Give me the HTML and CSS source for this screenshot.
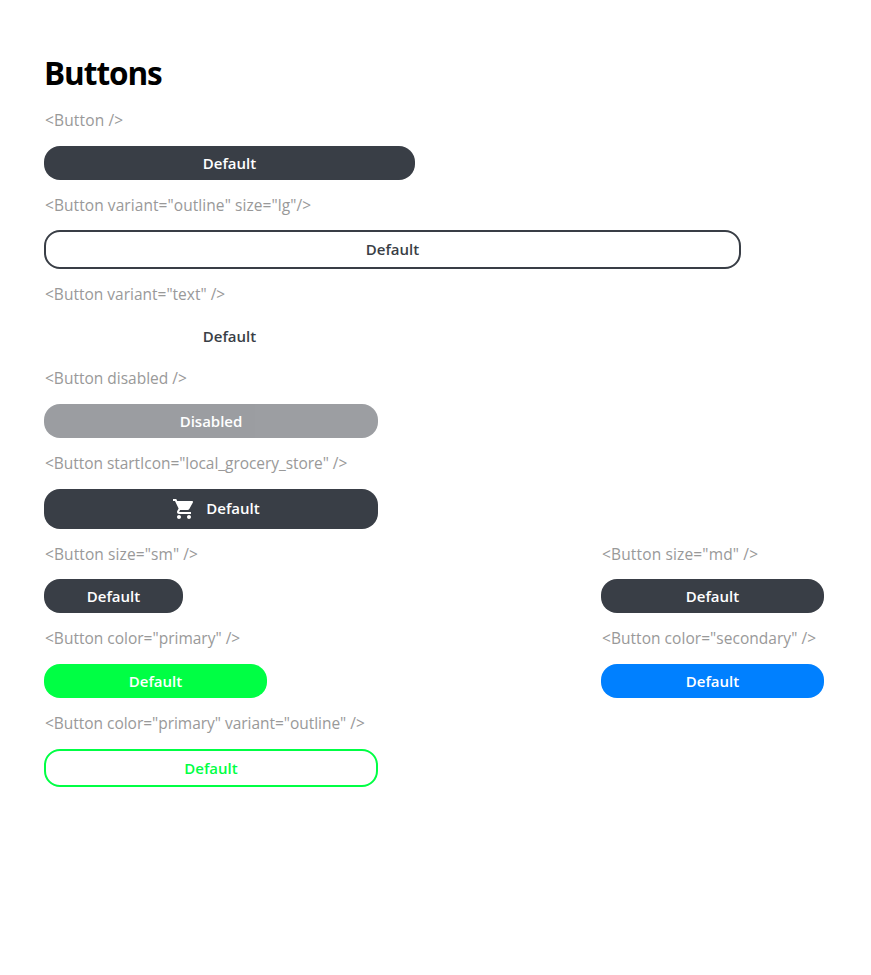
FILE: index.html
```html
<!DOCTYPE html>
<html lang="en">
<head>
<meta charset="utf-8">
<title>Buttons</title>
<link rel="stylesheet" href="styles.css">
</head>
<body>
<main class="page">
  <h1 class="title">Buttons</h1>
  <section class="item"><p class="label l1">&lt;Button /&gt;</p><button class="btn w-371">Default</button></section>
  <section class="item"><p class="label l2">&lt;Button variant="outline" size="lg"/&gt;</p><button class="btn outline w-lg">Default</button></section>
  <section class="item"><p class="label l3">&lt;Button variant="text" /&gt;</p><button class="btn text w-371">Default</button></section>
  <section class="item"><p class="label l4">&lt;Button disabled /&gt;</p><button class="btn w-334" disabled>Disabled</button></section>
  <section class="item"><p class="label l5">&lt;Button startIcon="local_grocery_store" /&gt;</p><button class="btn with-icon w-334"><svg class="icon" viewBox="0 0 24 24" aria-hidden="true"><path d="M7 18c-1.1 0-1.99.9-1.99 2S5.9 22 7 22s2-.9 2-2-.9-2-2-2zM1 2v2h2l3.6 7.59-1.35 2.45c-.16.28-.25.61-.25.96 0 1.1.9 2 2 2h12v-2H7.42c-.14 0-.25-.11-.25-.25l.03-.12.9-1.63h7.45c.75 0 1.41-.41 1.75-1.03l3.58-6.49c.08-.14.12-.31.12-.48 0-.55-.45-1-1-1H5.21l-.94-2H1zm16 16c-1.1 0-1.99.9-1.99 2s.89 2 1.99 2 2-.9 2-2-.9-2-2-2z"/></svg><span>Default</span></button></section>
  <div class="pair">
    <section class="item"><p class="label l6">&lt;Button size="sm" /&gt;</p><button class="btn w-sm">Default</button></section>
    <section class="item"><p class="label l7">&lt;Button size="md" /&gt;</p><button class="btn w-md">Default</button></section>
    <section class="item"><p class="label l8">&lt;Button color="primary" /&gt;</p><button class="btn primary w-md">Default</button></section>
    <section class="item"><p class="label l9">&lt;Button color="secondary" /&gt;</p><button class="btn secondary w-md">Default</button></section>
  </div>
  <section class="item"><p class="label l10">&lt;Button color="primary" variant="outline" /&gt;</p><button class="btn outline outline-primary w-334">Default</button></section>
</main>
</body>
</html>
```
FILE: styles.css
```css
* { box-sizing: border-box; }
body { margin: 0; background: #fff; font-family: "Open Sans", "Noto Sans", sans-serif; }
.page { padding: 51px 0 0 44px; }
.title { margin: 0; height: 44px; font-size: 31.5px; line-height: 43px; font-weight: 700; letter-spacing: -1.05px; }
.label { margin: 0; height: 50.67px; line-height: 50px; padding-left: 1px; font-size: 15.5px; font-weight: 400; color: #999; white-space: nowrap; }
.l1, .l7 { letter-spacing: .15px; }
.l2 { letter-spacing: .07px; }
.l5 { letter-spacing: -.05px; }
.l6 { letter-spacing: .1px; }
.l9 { letter-spacing: .04px; }
.l10 { letter-spacing: -.03px; }
.btn { display: flex; align-items: center; justify-content: center; height: 34px; padding: 0; border: 0; border-radius: 16px; background: #393e46; color: #fff; font-family: inherit; font-size: 15px; font-weight: 600; line-height: 20px; }
.btn:disabled { opacity: .5; }
.w-371 { width: 371px; }
.w-lg { width: 697px; }
.w-334 { width: 334px; }
.w-sm { width: 139px; }
.w-md { width: 223px; }
.outline { height: 38.33px; border: 2px solid #393e46; background: transparent; color: #393e46; }
.text { background: transparent; color: #393e46; }
.primary { background: #00ff44; }
.secondary { background: #0080ff; }
.outline-primary { border-color: #00ff44; color: #00ff44; }
.with-icon { height: 40px; gap: 10px; padding: 0 0 1px 10px; }
.icon { width: 24px; height: 24px; margin-top: 2px; fill: currentColor; }
.pair { display: grid; grid-template-columns: 557px 1fr; }
```
